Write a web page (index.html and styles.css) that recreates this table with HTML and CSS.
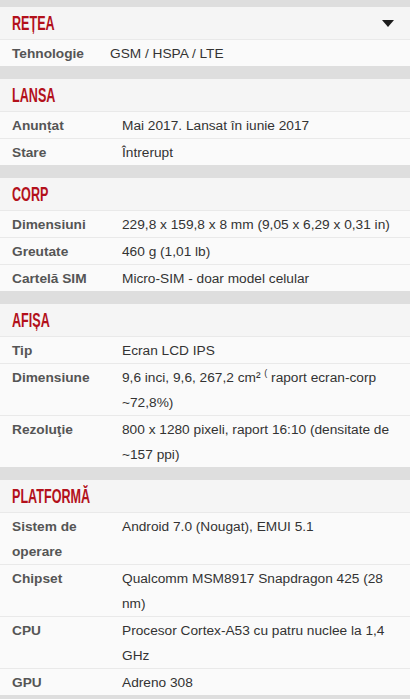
FILE: index.html
```html
<!DOCTYPE html>
<html>
  <head>
    <title>Specificatii</title>
    <link rel="stylesheet" href="styles.css">
  </head>
  <body>
    <div class="specs">
      <div class="gap gap-top"></div>

      <div class="section">
        <div class="sectionHead">
          <h2><span>REȚEA</span></h2>
          <svg class="toggle" width="12" height="8" viewBox="0 0 12 8"><polygon points="0,0 12,0 6,7" fill="#1c1c1c"/></svg>
        </div>
        <table class="narrow">
          <tr><th>Tehnologie</th><td>GSM / HSPA / LTE</td></tr>
        </table>
      </div>

      <div class="gap"></div>

      <div class="section">
        <div class="sectionHead"><h2><span>LANSA</span></h2></div>
        <table>
          <tr><th>Anunțat</th><td>Mai 2017. Lansat în iunie 2017</td></tr>
          <tr><th>Stare</th><td>Întrerupt</td></tr>
        </table>
      </div>

      <div class="gap"></div>

      <div class="section">
        <div class="sectionHead"><h2><span>CORP</span></h2></div>
        <table>
          <tr><th>Dimensiuni</th><td>229,8 x 159,8 x 8 mm (9,05 x 6,29 x 0,31 in)</td></tr>
          <tr><th>Greutate</th><td>460 g (1,01 lb)</td></tr>
          <tr><th>Cartelă SIM</th><td>Micro-SIM - doar model celular</td></tr>
        </table>
      </div>

      <div class="gap"></div>

      <div class="section">
        <div class="sectionHead"><h2><span>AFIȘA</span></h2></div>
        <table>
          <tr><th>Tip</th><td>Ecran LCD IPS</td></tr>
          <tr><th>Dimensiune</th><td>9,6 inci, 9,6, 267,2 cm²&nbsp;<span class="note">(</span> raport ecran-corp ~72,8%)</td></tr>
          <tr><th>Rezoluţie</th><td>800 x 1280 pixeli, raport 16:10 (densitate de ~157 ppi)</td></tr>
        </table>
      </div>

      <div class="gap"></div>

      <div class="section">
        <div class="sectionHead"><h2><span>PLATFORMĂ</span></h2></div>
        <table>
          <tr><th>Sistem de operare</th><td>Android 7.0 (Nougat), EMUI 5.1</td></tr>
          <tr><th>Chipset</th><td>Qualcomm MSM8917 Snapdragon 425 (28 nm)</td></tr>
          <tr><th>CPU</th><td>Procesor Cortex-A53 cu patru nuclee la 1,4 GHz</td></tr>
          <tr><th>GPU</th><td>Adreno 308</td></tr>
        </table>
      </div>

      <div class="gap"></div>
    </div>
  </body>
</html>
```

FILE: styles.css
```css
*{
  box-sizing: border-box;
}

body{
  margin: 0;
  background: #dedede;
  font-family: "Liberation Sans", Arial, sans-serif;
  font-size: 13.7px;
  color: #333333;
  overflow: hidden;
}

.gap{
  height: 13px;
  background: #dedede;
}

.gap-top{
  height: 7px;
}

.section{
  background: #fafafa;
}

.sectionHead{
  display: flex;
  align-items: center;
  justify-content: space-between;
  height: 32px;
  padding: 0 16px 0 12px;
  background: #f5f5f5;
}

.sectionHead h2{
  margin: 0;
  font-family: "Liberation Sans", Arial, sans-serif;
  font-weight: bold;
  font-size: 21px;
  line-height: 32px;
  color: #b3111b;
}

.sectionHead h2 span{
  display: inline-block;
  transform: scaleX(0.6);
  transform-origin: left center;
}

.toggle{
  display: block;
  margin-top: 1px;
}

table{
  width: 100%;
  border-collapse: collapse;
}

table th, table td{
  padding: 1px 0 0 0;
  line-height: 25px;
  text-align: left;
  vertical-align: top;
  border-top: 1px solid #e9e9e9;
}

table th{
  width: 122px;
  padding-left: 12px;
  padding-right: 10px;
  font-weight: bold;
  color: #555555;
}

table td{
  padding-right: 8px;
}

table.narrow th{
  width: 110px;
}

.note{
  display: inline-block;
  font-size: 9px;
  line-height: 10px;
  vertical-align: 6px;
}
```
